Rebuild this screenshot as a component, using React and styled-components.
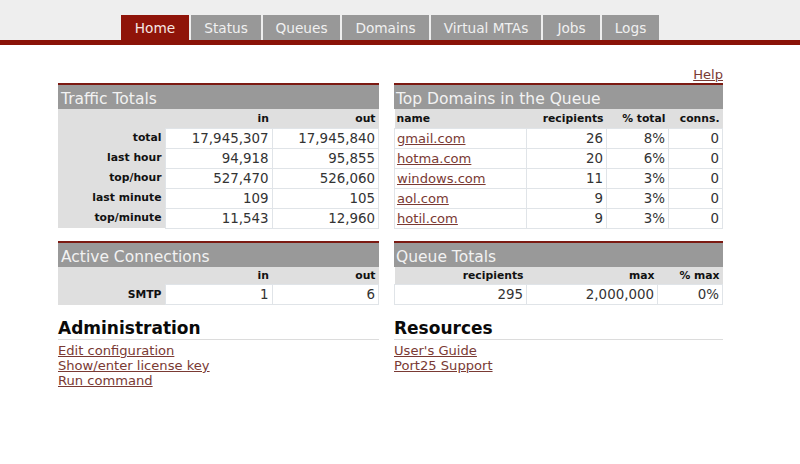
import React from "react";
import styled, { createGlobalStyle } from "styled-components";

const Global = createGlobalStyle`
  html, body { margin: 0; padding: 0; background: #fff; }
  body { font-family: "DejaVu Sans", Verdana, sans-serif; color: #222; }
`;

const Header = styled.div`
  height: 40px;
  background: #eeeeee;
  border-bottom: 5px solid #8a1308;
  display: flex;
  align-items: flex-end;
  padding-left: 121px;
  gap: 2px;
`;
const Tab = styled.a`
  width: ${p => p.$w}px;
  height: 25px;
  line-height: 26px;
  text-align: center;
  font-size: 13.7px;
  color: ${p => (p.$active ? "#f6e6e2" : "#f0f0f0")};
  background: ${p => (p.$active ? "#8f1409" : "#989898")};
`;
const HelpRow = styled.div`
  height: 38px;
  width: 665px;
  margin-left: 58px;
  padding-top: 21px;
  box-sizing: border-box;
  text-align: right;
  font-size: 13px;
  line-height: 17px;
`;
const Link = styled.a`
  color: #7a3a34;
  font-size: 13.1px;
  text-decoration: underline;
  text-underline-offset: 1px;
`;
const Columns = styled.div`
  display: grid;
  grid-template-columns: 321px 329px;
  column-gap: 15px;
  row-gap: 12px;
  margin-left: 58px;
  width: 665px;
`;
const Panel = styled.section`
  border-top: 2px solid #7c1a12;
`;
const Title = styled.div`
  height: 24px;
  line-height: 28px;
  padding-left: ${p => p.$inset}px;
  background: #999999;
  color: #f2f2f2;
  font-size: 15.5px;
`;
const Table = styled.table`
  width: 100%;
  border-collapse: collapse;
  table-layout: fixed;
`;
const Head = styled.th`
  width: ${p => (p.$w ? `${p.$w}px` : "auto")};
  height: ${p => p.$h || 18}px;
  padding: 0 3px ${p => (p.$h || 18) - 18}px ${p => (p.$left ? 2 : 3)}px;
  box-sizing: border-box;
  vertical-align: bottom;
  background: #dfdfdf;
  color: #111;
  font-size: 10.8px;
  font-weight: bold;
  line-height: 16px;
  text-align: ${p => (p.$left ? "left" : "right")};
  white-space: nowrap;
`;
const RowHead = styled(Head).attrs({ scope: "row" })`
  height: 20px;
  padding-bottom: 2px;
`;
const Cell = styled.td`
  height: 20px;
  padding: 0 3px 0 ${p => (p.$left ? 2 : 3)}px;
  box-sizing: border-box;
  font-size: 13.4px;
  line-height: 19px;
  text-align: ${p => (p.$left ? "left" : "right")};
  background: #fff;
  border: 1px solid #e0e4e8;
  color: #333;
  white-space: nowrap;
`;
const Section = styled.div``;
const Heading = styled.h2`
  margin: 0;
  height: 22px;
  font-size: 17px;
  line-height: 23px;
  font-weight: bold;
  color: #0a0a0a;
  border-bottom: 1px solid #dcdcdc;
`;
const LinkList = styled.div`
  display: flex;
  flex-direction: column;
  align-items: flex-start;
  padding-top: 3px;
  line-height: 15px;
`;

const tabs = [
  ["Home", 68, true],
  ["Status", 70],
  ["Queues", 77],
  ["Domains", 87],
  ["Virtual MTAs", 110],
  ["Jobs", 57],
  ["Logs", 57],
];
const traffic = [
  ["total", "17,945,307", "17,945,840"],
  ["last hour", "94,918", "95,855"],
  ["top/hour", "527,470", "526,060"],
  ["last minute", "109", "105"],
  ["top/minute", "11,543", "12,960"],
];
const domains = [
  ["gmail.com", 26, "8%", 0],
  ["hotma.com", 20, "6%", 0],
  ["windows.com", 11, "3%", 0],
  ["aol.com", 9, "3%", 0],
  ["hotil.com", 9, "3%", 0],
];

const InOut = ({ rows, headH }) => (
  <Table>
    <thead>
      <tr>
        <Head $w={107} $h={headH} />
        <Head $w={107} $h={headH}>in</Head>
        <Head $h={headH}>out</Head>
      </tr>
    </thead>
    <tbody>
      {rows.map(r => (
        <tr key={r[0]}>
          <RowHead>{r[0]}</RowHead>
          <Cell>{r[1]}</Cell>
          <Cell>{r[2]}</Cell>
        </tr>
      ))}
    </tbody>
  </Table>
);

export default function App() {
  return (
    <>
      <Global />
      <Header>
        {tabs.map(([t, w, a]) => (
          <Tab key={t} $w={w} $active={a}>{t}</Tab>
        ))}
      </Header>
      <HelpRow><Link href="#">Help</Link></HelpRow>
      <Columns>
        <Panel>
          <Title $inset={3}>Traffic Totals</Title>
          <InOut rows={traffic} headH={19} />
        </Panel>
        <Panel>
          <Title $inset={2}>Top Domains in the Queue</Title>
          <Table>
            <thead>
              <tr>
                <Head $left $w={132} $h={19}>name</Head>
                <Head $w={80} $h={19}>recipients</Head>
                <Head $w={62} $h={19}>% total</Head>
                <Head $h={19}>conns.</Head>
              </tr>
            </thead>
            <tbody>
              {domains.map(d => (
                <tr key={d[0]}>
                  <Cell $left><Link href="#">{d[0]}</Link></Cell>
                  <Cell>{d[1]}</Cell>
                  <Cell>{d[2]}</Cell>
                  <Cell>{d[3]}</Cell>
                </tr>
              ))}
            </tbody>
          </Table>
        </Panel>
        <Panel>
          <Title $inset={3}>Active Connections</Title>
          <InOut rows={[["SMTP", "1", "6"]]} />
        </Panel>
        <Panel>
          <Title $inset={2}>Queue Totals</Title>
          <Table>
            <thead>
              <tr>
                <Head $w={132}>recipients</Head>
                <Head $w={131}>max</Head>
                <Head>% max</Head>
              </tr>
            </thead>
            <tbody>
              <tr>
                <Cell>295</Cell>
                <Cell>2,000,000</Cell>
                <Cell>0%</Cell>
              </tr>
            </tbody>
          </Table>
        </Panel>
        <Section>
          <Heading>Administration</Heading>
          <LinkList>
            <Link href="#">Edit configuration</Link>
            <Link href="#">Show/enter license key</Link>
            <Link href="#">Run command</Link>
          </LinkList>
        </Section>
        <Section>
          <Heading>Resources</Heading>
          <LinkList>
            <Link href="#">User's Guide</Link>
            <Link href="#">Port25 Support</Link>
          </LinkList>
        </Section>
      </Columns>
    </>
  );
}
